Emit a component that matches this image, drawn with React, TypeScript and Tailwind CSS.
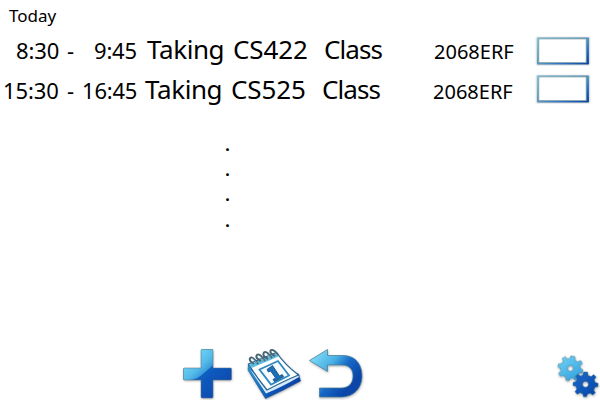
import React from 'react';

type Row = {
  start: string;
  end: string;
  title: string;
  course: string;
  room: string;
  indent: string;
  startBox: string;
  endPad: string;
  roomPad: string;
  boxPad: string;
};

const rows: Row[] = [
  { start: '8:30', end: '9:45', title: 'Taking', course: 'CS422', room: '2068ERF', indent: 'pl-[147px]', startBox: 'pl-[16px]', endPad: 'pl-[12px]', roomPad: 'pl-[434px]', boxPad: 'pt-[6px]' },
  { start: '15:30', end: '16:45', title: 'Taking', course: 'CS525', room: '2068ERF', indent: 'pl-[145px]', startBox: 'pl-[3px]', endPad: 'pl-0', roomPad: 'pl-[433px]', boxPad: 'pt-[4px]' },
];

function CheckBox() {
  return (
    <svg className="block h-[32px] w-[58px]" viewBox="0 0 58 32">
      <rect x="1.500" y="1.500" width="55" height="29.500" rx="2" fill="#ececec" />
      <rect x="3" y="2.500" width="52" height="27" rx="1" fill="url(#frame)" stroke="#8394a0" strokeOpacity=".55" strokeWidth=".6" />
      <rect x="4.800" y="3.900" width="47.400" height="23.800" fill="#fff" stroke="#81939d" strokeWidth=".8" />
    </svg>
  );
}

function Defs() {
  return (
    <svg className="absolute h-0 w-0">
      <defs>
        <linearGradient id="frame" x1="0" y1="0" x2="1" y2="1">
          <stop offset="0" stopColor="#7bd8f0" /><stop offset=".5" stopColor="#4b9bc4" /><stop offset=".7" stopColor="#2474cb" /><stop offset="1" stopColor="#003da5" />
        </linearGradient>
        <linearGradient id="deep" x1="0" y1="0" x2="1" y2="1">
          <stop offset="0" stopColor="#2f8fda" /><stop offset=".55" stopColor="#0b58bd" /><stop offset="1" stopColor="#0642a6" />
        </linearGradient>
        <linearGradient id="plusLight" gradientUnits="userSpaceOnUse" x1="12" y1="12" x2="36" y2="38">
          <stop offset="0" stopColor="#7bdcf8" /><stop offset=".55" stopColor="#55bce9" /><stop offset="1" stopColor="#1d74cb" />
        </linearGradient>
        <linearGradient id="gearLight" x1="0" y1="0" x2="1" y2="1">
          <stop offset="0" stopColor="#73d2f4" /><stop offset=".5" stopColor="#4fb9eb" /><stop offset="1" stopColor="#2c98d8" />
        </linearGradient>
        <linearGradient id="gearDeep" x1="0" y1="0" x2="1" y2="1">
          <stop offset="0" stopColor="#1b6cca" /><stop offset="1" stopColor="#0642a6" />
        </linearGradient>
        <linearGradient id="pages" x1="0" y1="0" x2="1" y2="0">
          <stop offset="0" stopColor="#2f9bd8" /><stop offset=".4" stopColor="#0b55b6" /><stop offset="1" stopColor="#0642a6" />
        </linearGradient>
        <linearGradient id="bend" gradientUnits="userSpaceOnUse" x1="15" y1="10" x2="52" y2="42">
          <stop offset="0" stopColor="#80dcf8" /><stop offset=".4" stopColor="#49b0e4" /><stop offset=".65" stopColor="#1768c6" /><stop offset="1" stopColor="#0745a9" />
        </linearGradient>
        <filter id="soft" x="-20%" y="-20%" width="140%" height="150%">
          <feDropShadow dx=".4" dy="1" stdDeviation=".8" floodColor="#333" floodOpacity=".4" />
        </filter>
        <clipPath id="plusClip">
          <path d="M26 9h12v19h18.500v12H38v18H26V40H8.500V28H26z" />
        </clipPath>
      </defs>
    </svg>
  );
}

function PlusIcon() {
  const d = 'M27 9.500h10q1 0 1 1V28h17.500q1 0 1 1v10q0 1-1 1H38v17q0 1-1 1H27q-1 0-1-1V40H9.500q-1 0-1-1V29q0-1 1-1H26V10.500q0-1 1-1z';
  return (
    <svg className="block h-[60px] w-[65px]" viewBox="0 0 65 60">
      <path d={d} fill="url(#deep)" filter="url(#soft)" />
      <g clipPath="url(#plusClip)">
        <path d="M0 0h46v20Q36 26 29 33T14 40H0z" fill="url(#plusLight)" />
      </g>
      <path d={d} fill="none" stroke="#5b7484" strokeOpacity=".65" strokeWidth=".8" />
    </svg>
  );
}

function CalendarIcon() {
  return (
    <svg className="block h-[60px] w-[62px]" viewBox="0 0 62 60">
      <g filter="url(#soft)">
        <path d="M8.500 24L8 30L25.500 58.500Q44 50 60.500 41L58.500 34z" fill="url(#pages)" stroke="#194d7e" strokeWidth=".6" />
        <path d="M10.500 30L26 53.500Q42 47 59 37L58 35L28 48z" fill="#d4eafa" />
        <path d="M8.500 24L36.500 12.500Q45 25 58.500 35Q44 41 27 50Q17 38 8.500 24z" fill="#fff" stroke="#28668f" strokeWidth="1.300" />
        <path d="M9 24.500L36.500 13L38.500 16.500L11.500 28z" fill="#5fbce1" />
        <path d="M19.500 29.500L38 21L49 35.500L31 44.500z" fill="#f5fbfe" stroke="#2d89c2" strokeWidth="1.800" />
        <path d="M27 29.500L32.500 25.500L39.500 36L42.200 34.500L43.700 36.700L34.500 41.700L33 39.500L35.600 38L30.600 31L28.400 32z" fill="#1f6fb9" stroke="#174a78" strokeWidth=".8" />
      </g>
      <g fill="none" stroke="#4a6570" strokeWidth="2">
        <path d="M14 24C7 20 10 15 14 19L18 24" /><path d="M21 21C13 17 17 12 21 16L25 21" />
        <path d="M28 19C20 15 24 9.500 28 13.500L32 18" /><path d="M35 16C27 12 31 7.500 35 11.500L38 15" />
      </g>
      <g fill="none" stroke="#7ec7e4" strokeWidth=".7">
        <path d="M12 18L17 23" /><path d="M19 15.500L24 20.500" /><path d="M26 13L31 17.500" /><path d="M33 11L37 15" />
      </g>
    </svg>
  );
}

function ReturnIcon() {
  return (
    <svg className="block h-[60px] w-[65px]" viewBox="0 0 65 60">
      <path d="M7.500 20.500L25.500 9.500V15.500H41C54 15.500 60 25 60 36C60 48 52 57 39 57H17.500V48H39C47 48 51 43 51 36C51 29 47 25 40 25H25.500V31.500z" fill="url(#bend)" stroke="#47788f" strokeWidth=".7" filter="url(#soft)" />
    </svg>
  );
}

function Gear({ fill }: { fill: string }) {
  return (
    <path
      fillRule="evenodd"
      strokeLinejoin="round"
      d="M-2-12H2L2.700-8.600L5.600-7.400L8.300-9.400L10.600-7L8.700-4.200L9.800-1.600L12.500-.8V2.600L9.500 3.200L8.300 6L9.800 8.800L7.300 11L4.600 9.200L2 10.200L1 12.800H-2L-2.800 9.900L-5.400 8.700L-8.200 10.300L-10.500 7.800L-8.700 5L-9.700 2.300L-12.500 1.500V-1.600L-9.600-2.400L-8.400-5L-10-7.800L-7.600-10L-5-8.100L-2.700-9zM0-2.600A2.900 2.900 0 1 0 0 3.200A2.900 2.900 0 1 0 0-2.600z"
      fill={fill}
      stroke="#45768d"
      strokeOpacity=".75"
      strokeWidth=".7"
      filter="url(#soft)"
    />
  );
}

function GearsIcon() {
  return (
    <svg className="block h-[55px] w-[50px]" viewBox="0 0 50 55">
      <g transform="translate(20.500 23) rotate(12)"><Gear fill="url(#gearLight)" /></g>
      <g transform="translate(35.500 39)"><Gear fill="url(#gearDeep)" /></g>
    </svg>
  );
}

function ScheduleRow({ row }: { row: Row }) {
  return (
    <div className="flex h-10 w-[600px]">
      <div className="grid w-[534px] items-baseline leading-[40px] *:col-start-1 *:row-start-1">
        <div className={`flex text-[22px] tracking-[-0.100px] ${row.startBox}`}>
          <span>{row.start}</span>
        </div>
        <div className="flex pl-[67px] text-[22px] tracking-[-0.200px]">
          <span className="w-[15px]">-</span>
          <span className={row.endPad}>{row.end}</span>
        </div>
        <div className={`flex text-[26px] ${row.indent}`}>
          <span className="w-[86px] tracking-[-0.400px]">{row.title}</span>
          <span className="w-[91px] tracking-[-0.100px]">{row.course}</span>
          <span className="tracking-[-0.900px]">Class</span>
        </div>
        <div className={`text-[20px] ${row.roomPad}`}>{row.room}</div>
      </div>
      <div className={row.boxPad}><CheckBox /></div>
    </div>
  );
}

export default function App() {
  return (
    <main className="relative flex h-[400px] w-[600px] flex-col overflow-hidden bg-white font-['Noto_Sans','Open_Sans',sans-serif] text-black">
      <Defs />
      <h1 className="h-[29px] pl-[9px] pt-[4px] text-[17px] leading-[24px]">Today</h1>
      <ScheduleRow row={rows[0]} />
      <ScheduleRow row={rows[1]} />
      <div className="flex h-[231px] flex-col pl-[225px] pt-[23px] text-[18px] font-semibold leading-[25.200px]">
        <span>.</span><span>.</span><span>.</span><span>.</span>
      </div>
      <footer className="flex h-[60px] items-end pl-[175px]">
        <PlusIcon /><CalendarIcon /><ReturnIcon />
        <div className="ml-auto"><GearsIcon /></div>
      </footer>
    </main>
  );
}
